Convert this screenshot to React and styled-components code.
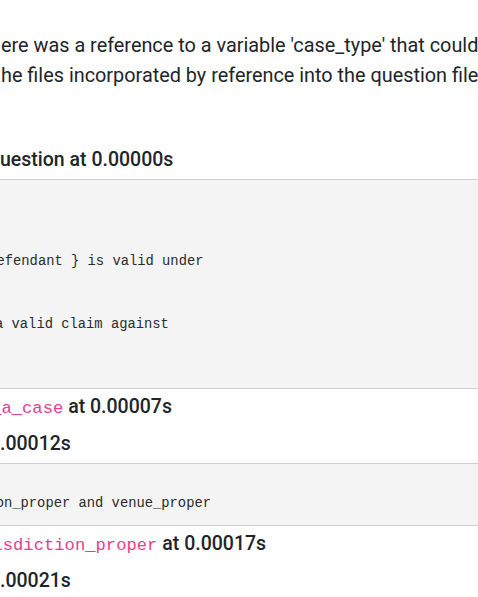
import React from "react";
import styled, { createGlobalStyle } from "styled-components";

const Global = createGlobalStyle`
  html, body {
    margin: 0;
    padding: 0;
    background: #ffffff;
    overflow: hidden;
  }
  body {
    font-family: Roboto, "Liberation Sans", Arial, sans-serif;
    color: #212529;
  }
`;

const Page = styled.main`
  width: 478px;
  height: 597px;
  overflow: hidden;
  box-sizing: border-box;
  padding-top: 31px;
`;

const Message = styled.p`
  margin: 0 0 54px;
  padding-left: 1px;
  font-size: 19.85px;
  line-height: 30px;
  white-space: nowrap;
`;

const Heading = styled.h5`
  margin: ${(p) => p.$top || 0}px 0 ${(p) => p.$bottom || 0}px;
  font-size: 19.5px;
  font-weight: 500;
  line-height: 30px;
  white-space: nowrap;
  text-indent: ${(p) => (p.$indent ? -p.$indent : 0)}px;
`;

const Var = styled.code`
  font-family: "Liberation Mono", "DejaVu Sans Mono", monospace;
  font-size: 17.2px;
  font-weight: 400;
  color: #e83e8c;
`;

const Source = styled.pre`
  margin: 0;
  padding: 8px 0 11px;
  background: #f4f4f4;
  border-top: 1px solid #cfcfcf;
  border-bottom: 1px solid #cfcfcf;
  font-family: "Liberation Mono", "DejaVu Sans Mono", monospace;
  font-size: 13.8px;
  line-height: 21px;
  color: #2b2b2b;
  white-space: pre;
`;

const CodeLine = styled.span`
  display: block;
  height: 21px;
  margin-left: ${(p) => (p.$shift ? -p.$shift : 0)}px;
`;

const firstSource = [
  { text: "" },
  { text: "" },
  { text: "" },
  { text: "efendant } is valid under", shift: 3.5 },
  { text: "" },
  { text: "" },
  { text: "a valid claim against", shift: 5 },
  { text: "" },
  { text: "" },
];

const secondSource = [
  { text: "" },
  { text: "on_proper and venue_proper", shift: 4.3 },
];

function SourceBlock({ lines }) {
  return (
    <Source>
      {lines.map((l, i) => (
        <CodeLine key={i} $shift={l.shift}>
          {l.text}
        </CodeLine>
      ))}
    </Source>
  );
}

export default function App() {
  return (
    <>
      <Global />
      <Page>
        <Message>
          ere was a reference to a variable 'case_type' that could
          <br />
          he files incorporated by reference into the question file
        </Message>
        <Heading $bottom={4}>uestion at 0.00000s</Heading>
        <SourceBlock lines={firstSource} />
        <Heading $top={3} $bottom={5} $indent={8.9}>
          <Var>_a_case</Var> at 0.00007s
        </Heading>
        <Heading $bottom={4}>.00012s</Heading>
        <SourceBlock lines={secondSource} />
        <Heading $top={3} $bottom={5} $indent={7.6}>
          <Var>isdiction_proper</Var> at 0.00017s
        </Heading>
        <Heading $bottom={4}>.00021s</Heading>
        <SourceBlock lines={[{ text: "" }]} />
      </Page>
    </>
  );
}
